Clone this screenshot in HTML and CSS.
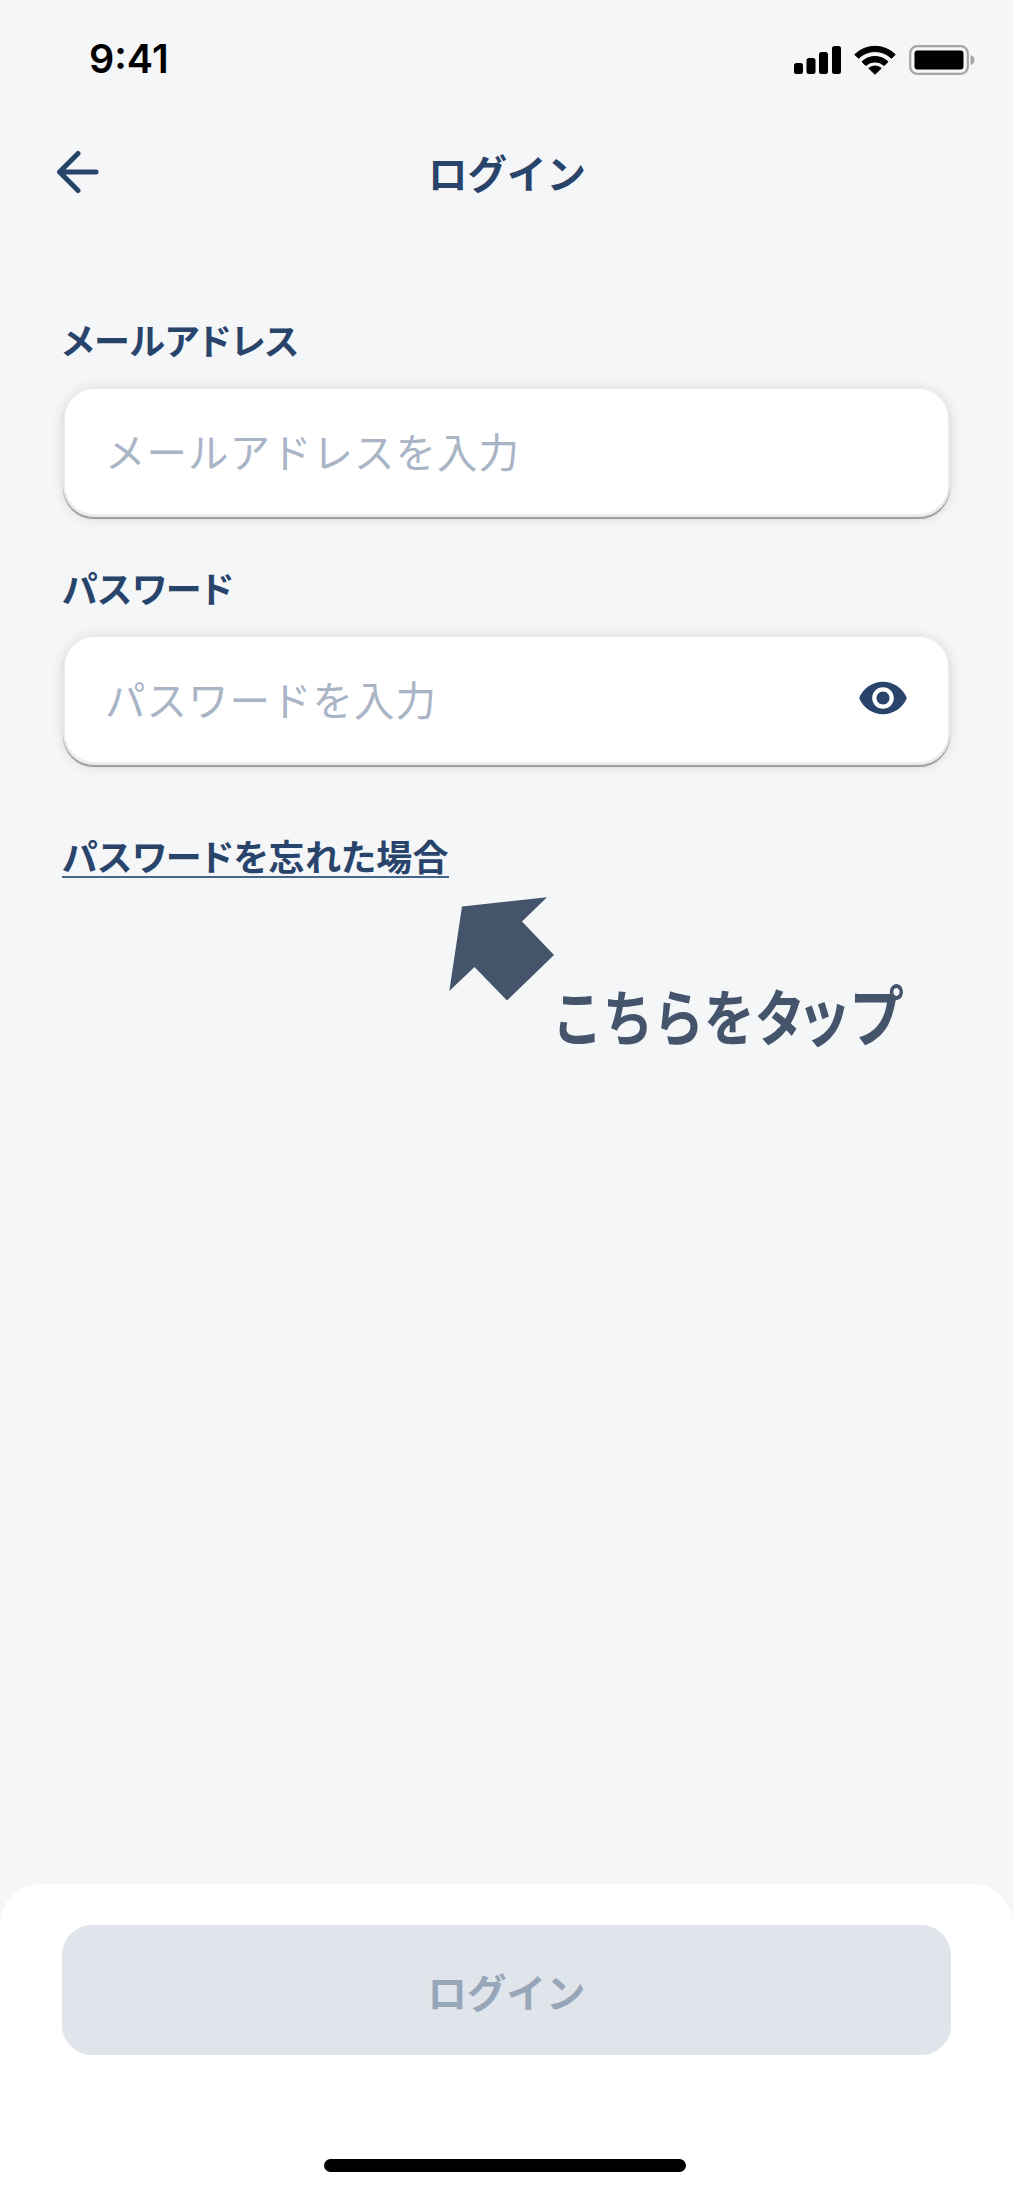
FILE: index.html
```
<!DOCTYPE html>
<html lang="ja">

<head>
  <meta charset="UTF-8">
  <meta name="viewport" content="width=device-width, initial-scale=1.0">
  <title>ログイン</title>
  <link rel="stylesheet" href="styles.css">
</head>

<body>
  <!-- Status bar -->
  <div class="status-bar">
    <span class="time">9:41</span>
    <div class="status-icons">
      <svg class="signal" width="47" height="30" viewBox="0 0 47 30">
        <rect x="0" y="18" width="9" height="11" rx="2.5" />
        <rect x="12.5" y="13" width="9" height="16" rx="2.5" />
        <rect x="25" y="7" width="9" height="22" rx="2.5" />
        <rect x="38" y="1" width="9" height="28" rx="2.5" />
      </svg>
      <svg class="wifi" width="42" height="30" viewBox="0 0 42 30">
        <path d="M0.8 9.5 A29 29 0 0 1 41.2 9.5 L37.5 13.3 A23.5 23.5 0 0 0 4.5 13.3 Z" stroke="#000" stroke-linejoin="round" />
        <path d="M8 16.7 A19 19 0 0 1 34 16.7 L30.2 20.5 A13.5 13.5 0 0 0 11.8 20.5 Z" stroke="#000" stroke-linejoin="round" />
        <path d="M14.8 23.3 A9.5 9.5 0 0 1 27.2 23.3 L21 29.3 Z" stroke="#000" stroke-linejoin="round" />
      </svg>
      <svg class="battery" width="66" height="30" viewBox="0 0 66 30">
        <rect x="1.2" y="1.2" width="57.6" height="27.6" rx="7" fill="none" stroke="#a3a5a7" stroke-width="2.2" />
        <rect x="5.5" y="5.5" width="49" height="19" rx="3" />
        <path d="M61.5 10 Q65.5 11.5 65.5 15 T61.5 20 Z" fill="#a3a5a7" />
      </svg>
    </div>
  </div>

  <header>
    <a href="#" class="back" aria-label="戻る">
      <svg width="44" height="44" viewBox="0 0 44 44">
        <path d="M22 3.5 L3.5 22 L22 40.5 M4 22 H40" />
      </svg>
    </a>
    <h1>ログイン</h1>
  </header>

  <!-- Login form -->
  <main>
    <form id="login-form">
      <label for="email">メールアドレス</label>
      <div class="field">
        <input type="email" id="email" placeholder="メールアドレスを入力">
      </div>

      <label for="password">パスワード</label>
      <div class="field">
        <input type="password" id="password" placeholder="パスワードを入力">
        <svg class="eye" width="52" height="52" viewBox="0 0 24 24">
          <path d="M12 4.5C7 4.5 2.73 7.61 1 12c1.73 4.39 6 7.5 11 7.5s9.27-3.11 11-7.5c-1.73-4.39-6-7.5-11-7.5zM12 17c-2.76 0-5-2.24-5-5s2.24-5 5-5 5 2.24 5 5-2.24 5-5 5zm0-8c-1.66 0-3 1.34-3 3s1.34 3 3 3 3-1.34 3-3-1.34-3-3-3z" />
        </svg>
      </div>
    </form>

    <a href="#" class="forgot">パスワードを忘れた場合</a>

    <!-- Tap hint -->
    <div class="hint">
      <svg width="106" height="104" viewBox="0 0 106 104">
        <path d="M13 9.5 L98 0.3 L73 24.5 L105 58 L58 103.5 L25.5 70 L0.3 94 Z" />
      </svg>
      <p>こちらをタ<span class="tight">ップ</span></p>
    </div>
  </main>

  <!-- Bottom sheet -->
  <footer>
    <button type="submit" form="login-form" disabled>ログイン</button>
    <div class="home-bar"></div>
  </footer>
</body>

</html>
```

FILE: styles.css
```
* {
  box-sizing: border-box;
}

body {
  margin: 0;
  height: 2193px;
  display: flex;
  flex-direction: column;
  background-color: #f4f6f8;
  color: #29446b;
  font-family: "Noto Sans CJK JP", sans-serif;
}

svg {
  display: block;
  flex-shrink: 0;
}

/* Status bar */
.status-bar {
  height: 119px;
  padding: 0 38px 0 89px;
  display: flex;
  align-items: center;
  justify-content: space-between;
  color: #000;
}

.time {
  margin-bottom: 2px;
  font-family: Inter, sans-serif;
  font-size: 39.5px;
  font-weight: 600;
}

.status-icons {
  display: flex;
  align-items: center;
}

.wifi {
  margin: 0 13px 0 13px;
}

/* Header */
header {
  height: 106px;
  padding: 0 56px;
  display: grid;
  grid-template-columns: 44px 1fr 44px;
  align-items: center;
}

.back path {
  fill: none;
  stroke: #29446b;
  stroke-width: 5;
  stroke-linecap: round;
  stroke-linejoin: round;
}

h1 {
  margin: 0 -1px 0 0;
  font-size: 39.5px;
  line-height: 56px;
  font-weight: 700;
  text-align: center;
}

/* Form */
main {
  flex: 1;
  padding: 89px 62px 0;
}

label {
  display: block;
  font-size: 36px;
  line-height: 50px;
  font-weight: 700;
  font-feature-settings: "palt";
  letter-spacing: 0.4px;
}

.field {
  height: 125px;
  margin: 25px 3px 48px;
  padding: 0 39px 0 40px;
  display: flex;
  align-items: center;
  background-color: #fff;
  border-radius: 29px;
  box-shadow: 0 1px 0 2px #eaecf0, 0 3px 1px 2px #999, 0 2px 14px 1px rgba(0, 0, 0, 0.14);
}

input {
  flex: 1;
  min-width: 0;
  padding: 0 0 3px;
  border: none;
  outline: none;
  background: none;
  color: #29446b;
  font-family: inherit;
  font-size: 40.5px;
  letter-spacing: 1px;
}

input::placeholder {
  color: #a9b4c5;
  opacity: 1;
}

.eye {
  margin-bottom: 4px;
  fill: #29446b;
}

/* Forgot password link */
.forgot {
  display: block;
  width: max-content;
  margin-top: 73px;
  border-bottom: 2px solid #4a658a;
  color: #29446b;
  font-size: 36px;
  line-height: 41px;
  font-weight: 700;
  font-feature-settings: "palt";
  letter-spacing: 0.4px;
  text-decoration: none;
}

/* Tap hint */
.hint {
  margin: 19px 0 0 387px;
  display: flex;
  color: #44546a;
}

.hint svg {
  fill: #44546a;
}

.hint p {
  margin: 76px 0 0 -3px;
  font-size: 61px;
  line-height: 84px;
  font-weight: 700;
  white-space: nowrap;
  transform: scaleX(0.83);
  transform-origin: left;
}

.hint .tight {
  margin-left: -10px;
  font-size: 66px;
  line-height: 1;
  letter-spacing: -3px;
}

/* Bottom sheet */
footer {
  height: 309px;
  padding: 41px 62px 21px;
  display: flex;
  flex-direction: column;
  align-items: center;
  justify-content: space-between;
  background-color: #fff;
  border-radius: 40px 40px 0 0;
}

button {
  width: 100%;
  height: 130px;
  padding: 0;
  border: none;
  border-radius: 30px;
  background-color: #e0e4eb;
  color: #98a6b9;
  font-family: inherit;
  font-size: 39.5px;
  font-weight: 700;
}

.home-bar {
  width: 362px;
  height: 13px;
  margin-right: 4px;
  border-radius: 7px;
  background-color: #000;
}
```
